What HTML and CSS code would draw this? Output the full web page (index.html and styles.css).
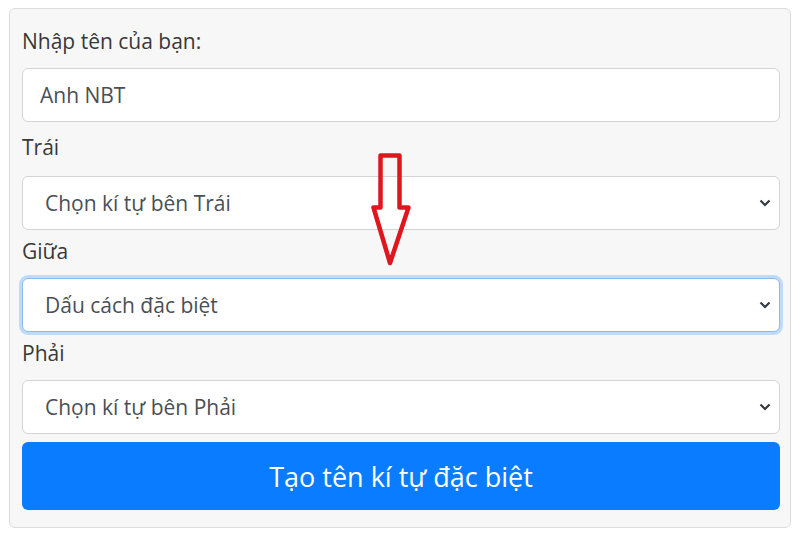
FILE: index.html
```html
<!DOCTYPE html>
<html lang="vi">
<head>
  <meta charset="UTF-8" />
  <title>Tạo tên kí tự đặc biệt</title>
  <link rel="stylesheet" href="styles.css">
</head>
<body>
  <div class="card">
    <form class="name-form" onsubmit="return false">

      <label for="name">Nhập tên của bạn:</label>
      <input type="text" id="name" name="name" value="Anh NBT">

      <label for="left" class="after-name">Trái</label>
      <select id="left" name="left">
        <option>Chọn kí tự bên Trái</option>
      </select>

      <label for="middle">Giữa</label>
      <select id="middle" name="middle" class="focused">
        <option>Dấu cách đặc biệt</option>
      </select>

      <label for="right">Phải</label>
      <select id="right" name="right">
        <option>Chọn kí tự bên Phải</option>
      </select>

      <button type="submit">Tạo tên kí tự đặc biệt</button>
    </form>

    <!-- red hint arrow drawn over the form -->
    <svg class="hint-arrow" width="60" height="120" viewBox="0 0 60 120">
      <path d="M19.5 5.5 H38.5 V57.5 H47.5 L29 113 L12.5 57.5 H19.5 Z" fill="none" stroke="#e0161e" stroke-width="4.5" stroke-linejoin="round"/>
    </svg>
  </div>
</body>
</html>
```

FILE: styles.css
```css
body {
  margin: 0;
  background: #fff;
  font-family: "Open Sans", "Noto Sans", sans-serif;
}
.card {
  position: relative;
  margin: 8px 9px 0;
  padding: 11px 10px 17px 12px;
  background: #f7f7f7;
  border: 1px solid #dcdcdc;
  border-radius: 6px;
}
.name-form {
  display: flex;
  flex-direction: column;
}
label {
  display: block;
  margin: 7px 0 13px;
  line-height: 28px;
  font-size: 21px;
  color: #383838;
}
label.after-name {
  margin: 11px 0 15px;
}
input[type="text"],
select {
  box-sizing: border-box;
  width: 100%;
  height: 54px;
  margin: 0;
  border: 1px solid #d4d4d4;
  border-radius: 6px;
  background-color: #fff;
  font-family: inherit;
  font-size: 21px;
  color: #4a4f55;
  outline: none;
}
input[type="text"] {
  padding: 0 17px;
}
select {
  -webkit-appearance: none;
  appearance: none;
  padding: 0 40px 0 22px;
  background-image: url("data:image/svg+xml,%3Csvg xmlns='http://www.w3.org/2000/svg' width='12' height='8' viewBox='0 0 12 8'%3E%3Cpath d='M1.5 1.5 L6 6 L10.5 1.5' fill='none' stroke='%23343a40' stroke-width='2.2'/%3E%3C/svg%3E");
  background-repeat: no-repeat;
  background-position: right 8px center;
  background-size: 12px 8px;
}
select.focused {
  border-color: #86bdf5;
  box-shadow: 0 0 0 3px rgba(0, 123, 255, 0.22);
}
button {
  display: block;
  width: 100%;
  height: 68px;
  margin-top: 8px;
  background-color: #0a7cff;
  color: #fff;
  border: none;
  border-radius: 6px;
  font-family: inherit;
  font-size: 27px;
  cursor: pointer;
}
button:hover {
  background-color: #0069d9;
}
.hint-arrow {
  position: absolute;
  left: 351px;
  top: 141px;
}
```
